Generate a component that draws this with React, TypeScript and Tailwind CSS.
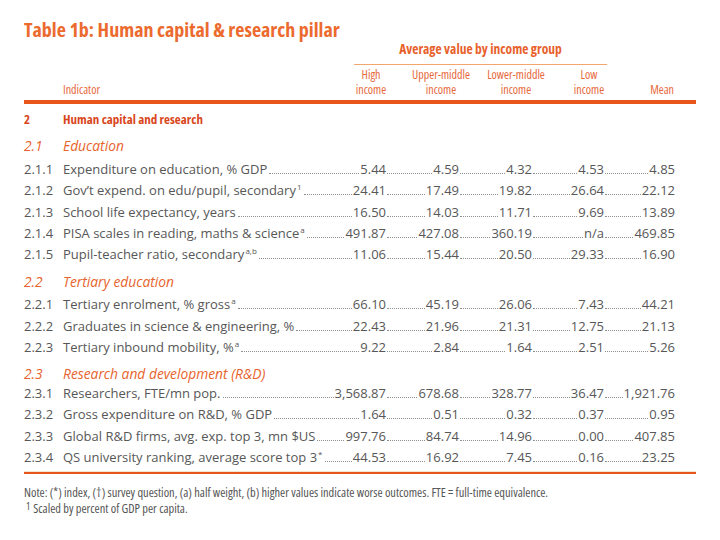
import React from "react";

type R = { n: string; label: string; sup?: string; v: string[] };

const edu: R[] = [
  { n: "2.1.1", label: "Expenditure on education, % GDP", v: ["5.44", "4.59", "4.32", "4.53", "4.85"] },
  { n: "2.1.2", label: "Gov\u2019t expend. on edu/pupil, secondary", sup: "1", v: ["24.41", "17.49", "19.82", "26.64", "22.12"] },
  { n: "2.1.3", label: "School life expectancy, years", v: ["16.50", "14.03", "11.71", "9.69", "13.89"] },
  { n: "2.1.4", label: "PISA scales in reading, maths & science", sup: "a", v: ["491.87", "427.08", "360.19", "n/a", "469.85"] },
  { n: "2.1.5", label: "Pupil-teacher ratio, secondary", sup: "a,b", v: ["11.06", "15.44", "20.50", "29.33", "16.90"] },
];
const ter: R[] = [
  { n: "2.2.1", label: "Tertiary enrolment, % gross", sup: "a", v: ["66.10", "45.19", "26.06", "7.43", "44.21"] },
  { n: "2.2.2", label: "Graduates in science & engineering, %", v: ["22.43", "21.96", "21.31", "12.75", "21.13"] },
  { n: "2.2.3", label: "Tertiary inbound mobility, %", sup: "a", v: ["9.22", "2.84", "1.64", "2.51", "5.26"] },
];
const rd: R[] = [
  { n: "2.3.1", label: "Researchers, FTE/mn pop.", v: ["3,568.87", "678.68", "328.77", "36.47", "1,921.76"] },
  { n: "2.3.2", label: "Gross expenditure on R&D, % GDP", v: ["1.64", "0.51", "0.32", "0.37", "0.95"] },
  { n: "2.3.3", label: "Global R&D firms, avg. exp. top 3, mn $US", v: ["997.76", "84.74", "14.96", "0.00", "407.85"] },
  { n: "2.3.4", label: "QS university ranking, average score top 3", sup: "*", v: ["44.53", "16.92", "7.45", "0.16", "23.25"] },
];

const leader = "flex-1 border-b border-dotted border-[#8f8f8f]";

function Row({ r }: { r: R }) {
  const widths = ["w-[73px]", "w-[73px]", "w-[72px]", "w-[71px]"];
  return (
    <div className="flex items-baseline h-[21.25px] leading-[21px] text-[13px] text-[#575757] font-['Open_Sans',sans-serif]">
      <div className="w-[39px] shrink-0">{r.n}</div>
      <div className="w-[323px] shrink-0 flex items-baseline">
        <span className="whitespace-nowrap">
          {r.label}
          {r.sup && <span className="relative -top-[5px] text-[8px] ml-[1px]">{r.sup}</span>}
        </span>
        <span className={`${leader} ml-[2px] mr-[1px]`} />
        <span className="whitespace-nowrap">{r.v[0]}</span>
      </div>
      {r.v.slice(1).map((v, i) => (
        <div key={i} className={`${widths[i]} shrink-0 flex items-baseline`}>
          <span className={`${leader} ml-[1px] mr-[1px]`} />
          <span className="whitespace-nowrap">{v}</span>
        </div>
      ))}
    </div>
  );
}

function Section({ n, title, box }: { n: string; title: string; box: string }) {
  return (
    <div className={`flex items-center ${box} text-[13.8px] italic text-[#e8632c] font-['Open_Sans',sans-serif]`}>
      <div className="w-[39px] shrink-0">{n}</div>
      <div className="whitespace-nowrap">{title}</div>
    </div>
  );
}

export default function App() {
  const narrow = "font-['Open_Sans',sans-serif] font-stretch-condensed";
  return (
    <div className="w-[720px] h-[540px] bg-white overflow-hidden">
      <div className="pl-[24px] pt-[18px] w-[696px]">
        <h1 className={`text-[20px] leading-[24px] font-bold text-[#ec6a2e] ${narrow}`}>
          Table 1b: Human capital &amp; research pillar
        </h1>
        <div className="ml-[330px] w-[253px] -mt-[1px]">
          <div className={`h-[16px] leading-[16px] text-center text-[13.5px] font-bold text-[#e8612b] ${narrow}`}>
            Average value by income group
          </div>
          <div className="mt-[7px] h-[1px] bg-[#f2a66e]" />
        </div>
        <div className={`flex items-end mt-[1.5px] h-[30px] leading-[15px] text-[12px] text-[#e6683a] ${narrow}`}>
          <div className="w-[317px] shrink-0 pl-[39px]">Indicator</div>
          <div className="w-[60px] shrink-0 text-center">High<br />income</div>
          <div className="w-[80px] shrink-0 text-center">Upper-middle<br />income</div>
          <div className="w-[70px] shrink-0 text-center whitespace-nowrap">Lower-middle<br />income</div>
          <div className="w-[76px] shrink-0 text-center">Low<br />income</div>
          <div className="w-[49px] shrink-0 text-right pr-[2px]">Mean</div>
        </div>
        <div className="mt-[3.5px] h-[4px] bg-[#e8561c]" />
        <div className={`flex items-center h-[22px] mt-[5px] text-[13px] font-bold text-[#d9461c] ${narrow}`}>
          <div className="w-[39px] shrink-0">2</div>
          <div>Human capital and research</div>
        </div>
        <Section n="2.1" title="Education" box="mt-[2px] h-[26px]" />
        {edu.map((r) => <Row key={r.n} r={r} />)}
        <Section n="2.2" title="Tertiary education" box="mt-[6px] h-[23px]" />
        {ter.map((r) => <Row key={r.n} r={r} />)}
        <Section n="2.3" title="Research and development (R&D)" box="mt-[7px] h-[18px]" />
        {rd.map((r) => <Row key={r.n} r={r} />)}
        <div className="mt-[3px] h-[1px] bg-[#f3e6d0]" />
        <div className="h-[2px] bg-[#e8561c]" />
        <div className={`mt-[11px] text-[12.4px] leading-[16px] text-[#555555] ${narrow}`}>
          <div className="whitespace-nowrap">Note: (*) index, (†) survey question, (a) half weight, (b) higher values indicate worse outcomes. FTE = full-time equivalence.</div>
          <div className="flex items-start">
            <span className="text-[10px] leading-[10px] mr-[3px] ml-[2px]">1</span>
            <span>Scaled by percent of GDP per capita.</span>
          </div>
        </div>
      </div>
    </div>
  );
}
